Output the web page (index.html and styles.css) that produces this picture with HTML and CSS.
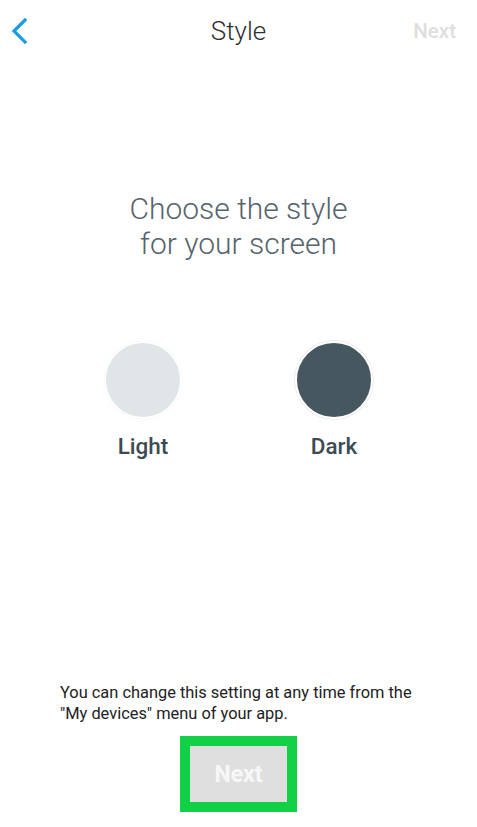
FILE: index.html
```html
<!DOCTYPE html>
<html lang="en">
<head>
  <meta charset="UTF-8">
  <title>Style</title>
  <link rel="stylesheet" href="styles.css">
</head>
<body>
  <div class="screen">
    <header class="topbar">
      <a class="back" href="#">
        <svg width="18" height="26" viewBox="0 0 18 26"><path d="M15 2 L4 13 L15 24" fill="none" stroke="#1a9be6" stroke-width="3.2" stroke-linecap="square"/></svg>
      </a>
      <div class="title">Style</div>
      <div class="next-top">Next</div>
    </header>

    <h1 class="question">Choose the style<br>for your screen</h1>

    <div class="choices">
      <div class="choice">
        <div class="swatch light"></div>
        <div class="label">Light</div>
      </div>
      <div class="choice">
        <div class="swatch dark"></div>
        <div class="label">Dark</div>
      </div>
    </div>

    <p class="note">You can change this setting at any time from the<br>"My devices" menu of your app.</p>

    <div class="action">
      <div class="highlight">
        <button class="next-btn">Next</button>
      </div>
    </div>
  </div>
</body>
</html>
```

FILE: styles.css
```css
html, body {
  margin: 0;
  background: #fff;
  font-family: Roboto, "Noto Sans", Arial, sans-serif;
}
.screen {
  height: 827px;
  display: flex;
  flex-direction: column;
}
.topbar {
  height: 62px;
  display: flex;
  align-items: center;
  padding: 0 21px;
}
.back {
  width: 60px;
  margin-left: -11px;
  padding-right: 11px;
  display: flex;
  align-items: center;
}
.title {
  flex: 1;
  text-align: center;
  font-size: 26px;
  font-weight: 300;
  color: #2e2e2e;
}
.next-top {
  width: 60px;
  text-align: right;
  font-size: 20.5px;
  font-weight: 500;
  color: #dedede;
}
.question {
  margin: 129px 0 0 0;
  text-align: center;
  font-size: 30px;
  line-height: 35px;
  font-weight: 300;
  color: #56636c;
}
.choices {
  margin-top: 80px;
  display: flex;
  justify-content: center;
  gap: 81px;
}
.choice {
  width: 110px;
  display: flex;
  flex-direction: column;
  align-items: center;
}
.swatch {
  width: 74px;
  height: 74px;
  border-radius: 50%;
  border: 2px solid #fff;
  box-shadow: 0 0 1px #e4e4e4;
}
.swatch.light {
  background: #e0e5e8;
}
.swatch.dark {
  background: #465760;
  box-shadow: 0 0 0 1px #eeeeee;
}
.label {
  margin-top: 15px;
  font-size: 22.5px;
  line-height: 24px;
  font-weight: 500;
  color: #3d4a52;
}
.note {
  margin: auto 0 0 0;
  padding-left: 60px;
  font-size: 16.4px;
  line-height: 21px;
  color: #222;
}
.action {
  margin: 12px 0 15px 0;
  display: flex;
  justify-content: center;
}
.highlight {
  border: 10px solid #12d045;
  display: flex;
}
.next-btn {
  width: 97px;
  height: 56px;
  border: none;
  background: #dfdfdf;
  color: #f7f7f7;
  font-family: Roboto, Arial, sans-serif;
  font-size: 23px;
  font-weight: 700;
}
```
